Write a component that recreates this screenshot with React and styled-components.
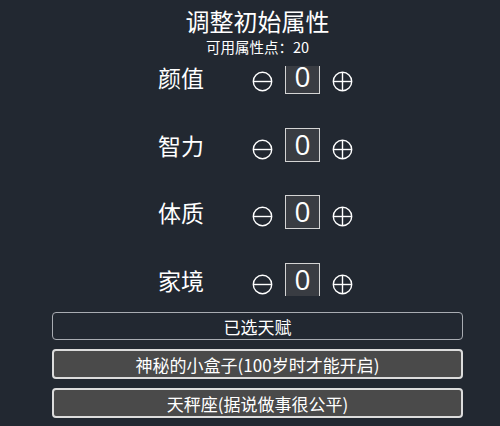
import React from 'react';
import styled, { createGlobalStyle } from 'styled-components';

const GlobalStyle = createGlobalStyle`
    html, body {
        margin: 0;
        padding: 0;
        background: #222831;
    }
    body {
        font-family: "Noto Sans CJK SC", "Noto Sans", sans-serif;
        color: #fff;
    }
`;

const Page = styled.div`
    width: 500px;
    height: 426px;
    box-sizing: border-box;
    padding: 7px 37px 0 52px;
    display: flex;
    flex-direction: column;
    align-items: stretch;
    overflow: hidden;
`;

const Title = styled.div`
    font-size: 24px;
    line-height: 28px;
    height: 28px;
    text-align: center;
`;

const Sub = styled.div`
    font-size: 14.5px;
    line-height: 18px;
    height: 18px;
    margin-top: 3px;
    text-align: center;
`;

const Scroller = styled.div`
    height: 230px;
    margin-top: 10px;
    overflow: hidden;
`;

const List = styled.div`
    margin-top: -6px;
    display: flex;
    flex-direction: column;
    gap: 33.5px;
`;

const Row = styled.div`
    height: 34px;
    display: flex;
    align-items: center;
    padding-left: 106px;
`;

const Label = styled.div`
    font-size: 23px;
    line-height: 34px;
    width: 48px;
    margin-right: 46px;
    white-space: nowrap;
`;

const Circle = styled.svg`
    width: 21px;
    height: 21px;
    margin-top: 9px;
    flex: none;
`;

const Value = styled.div`
    width: 35px;
    height: 34px;
    box-sizing: border-box;
    border: 1px solid #d4d4d4;
    background: #393c42;
    margin: 0 12px;
    font-family: "Open Sans", "Noto Sans", sans-serif;
    font-size: 28px;
    line-height: 31px;
    text-align: center;
`;

const Buttons = styled.div`
    margin-top: 16px;
    display: flex;
    flex-direction: column;
    gap: 9px;
`;

const Btn = styled.div`
    height: ${p => (p.$filled ? 30 : 28)}px;
    box-sizing: border-box;
    border-radius: 4px;
    border: ${p => (p.$filled ? '2px solid #dcdcdc' : '1px solid #a9acb2')};
    background: ${p => (p.$filled ? '#4a4a4a' : 'transparent')};
    font-size: 17px;
    display: flex;
    align-items: center;
    justify-content: center;
    white-space: nowrap;
`;

const Minus = () => (
    <Circle viewBox="0 0 21 21">
        <circle cx="10.5" cy="10.5" r="9.2" fill="none" stroke="#fff" strokeWidth="1.4" />
        <line x1="2" y1="10.5" x2="19" y2="10.5" stroke="#fff" strokeWidth="1.4" />
    </Circle>
);

const Plus = () => (
    <Circle viewBox="0 0 21 21">
        <circle cx="10.5" cy="10.5" r="9.2" fill="none" stroke="#fff" strokeWidth="1.4" />
        <line x1="2" y1="10.5" x2="19" y2="10.5" stroke="#fff" strokeWidth="1.4" />
        <line x1="10.5" y1="2" x2="10.5" y2="19" stroke="#fff" strokeWidth="1.4" />
    </Circle>
);

const attrs = ['颜值', '智力', '体质', '家境'];

export default function App() {
    return (
        <>
            <GlobalStyle />
            <Page>
                <Title>调整初始属性</Title>
                <Sub>可用属性点：20</Sub>
                <Scroller>
                    <List>
                        {attrs.map(a => (
                            <Row key={a}>
                                <Label>{a}</Label>
                                <Minus />
                                <Value>0</Value>
                                <Plus />
                            </Row>
                        ))}
                    </List>
                </Scroller>
                <Buttons>
                    <Btn>已选天赋</Btn>
                    <Btn $filled>神秘的小盒子(100岁时才能开启)</Btn>
                    <Btn $filled>天秤座(据说做事很公平)</Btn>
                </Buttons>
            </Page>
        </>
    );
}
